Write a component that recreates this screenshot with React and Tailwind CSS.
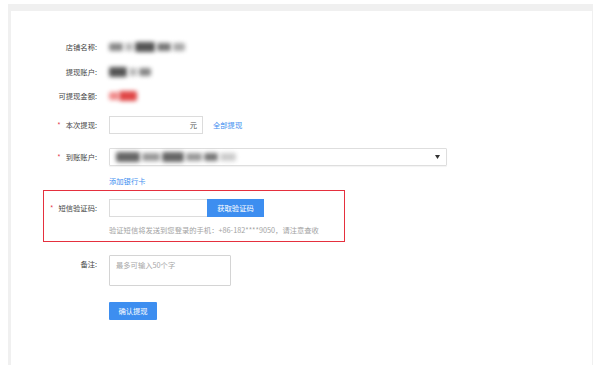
import React from "react";

const Label = ({ children, required, width = "w-[86px]" }) => (
  <div className={`${width} shrink-0 text-right text-[#444]`}>
    {required && <span className="text-[#e5404c] mr-[5px]">*</span>}
    {children}
  </div>
);

// blurred placeholder for hidden values in the screenshot
const Blur = ({ w, color = "bg-[#8c8c8c]", className = "" }) => (
  <div className={`h-[8px] ${w} ${color} rounded-[2px] blur-[2px] ${className}`} />
);

const App = () => {
  return (
    <div
      className="w-[593px] h-[365px] bg-white pl-[8px] pt-[4px] overflow-hidden text-[7.3px] leading-[12px]"
      style={{ fontFamily: '"Noto Sans CJK SC", "Noto Sans", sans-serif' }}
    >
      <div className="h-full bg-[#f0f0f0] pt-[7px] pl-[3px] pr-[1px]">
        <div className="h-full bg-white flex flex-col">
          {/* 店铺名称 */}
          <div className="flex items-center gap-[12px] mt-[30px] h-[12px]">
            <Label>店铺名称:</Label>
            <div className="flex items-center gap-[2px]">
              <Blur w="w-[14px]" color="bg-[#888]" />
              <Blur w="w-[8px]" color="bg-[#bbb]" />
              <Blur w="w-[20px]" color="bg-[#555]" className="h-[10px]" />
              <Blur w="w-[14px]" color="bg-[#777]" />
              <Blur w="w-[12px]" color="bg-[#aaa]" />
            </div>
          </div>

          {/* 提现账户 */}
          <div className="flex items-center gap-[12px] mt-[13px] h-[12px]">
            <Label>提现账户:</Label>
            <div className="flex items-center gap-[2px]">
              <Blur w="w-[18px]" color="bg-[#555]" className="h-[10px]" />
              <Blur w="w-[8px]" color="bg-[#bbb]" />
              <Blur w="w-[12px]" color="bg-[#888]" />
            </div>
          </div>

          {/* 可提现金额 */}
          <div className="flex items-center gap-[12px] mt-[12px] h-[12px]">
            <Label>可提现金额:</Label>
            <div className="flex items-center gap-[0px]">
              <Blur w="w-[10px]" color="bg-[#f08a8a]" />
              <Blur w="w-[18px]" color="bg-[#e04848]" className="h-[10px]" />
            </div>
          </div>

          {/* 本次提现 */}
          <div className="flex items-center gap-[12px] mt-[14px]">
            <Label required>本次提现:</Label>
            <div className="w-[94px] h-[18px] border border-[#dcdcdc] flex items-center justify-end pr-[5px] text-[#555]">
              元
            </div>
            <a className="ml-[-2px] text-[#3d8ef0] cursor-pointer">全部提现</a>
          </div>

          {/* 到账账户 */}
          <div className="flex items-center gap-[12px] mt-[14px]">
            <Label required>到账账户:</Label>
            <div className="w-[338px] h-[18px] border border-[#dedede] rounded-[1px] shadow-[0_1px_1px_rgba(0,0,0,0.05)] flex items-center justify-between pl-[6px] pr-[6px]">
              <div className="flex items-center gap-[2px]">
                <Blur w="w-[24px]" color="bg-[#666]" className="h-[10px]" />
                <Blur w="w-[18px]" color="bg-[#999]" />
                <Blur w="w-[22px]" color="bg-[#666]" className="h-[10px]" />
                <Blur w="w-[16px]" color="bg-[#999]" />
                <Blur w="w-[14px]" color="bg-[#777]" />
                <Blur w="w-[16px]" color="bg-[#ccc]" />
              </div>
              <svg width="5" height="4" viewBox="0 0 5 4">
                <path d="M0 0 H5 L2.5 4 Z" fill="#333" />
              </svg>
            </div>
          </div>

          {/* 添加银行卡 */}
          <div className="flex items-center gap-[12px] mt-[9px] h-[12px]">
            <div className="w-[86px] shrink-0" />
            <a className="text-[#3d8ef0] cursor-pointer">添加银行卡</a>
          </div>

          {/* 短信验证码 (highlighted) */}
          <div className="ml-[32px] mt-[3px] w-[302px] border border-[#e5303e] pt-[8px] pb-[5px]">
            <div className="flex items-center gap-[12px]">
              <Label required width="w-[53px]">短信验证码:</Label>
              <div className="flex">
                <div className="w-[98px] h-[18px] border border-[#dcdcdc] border-r-0" />
                <button className="w-[57px] h-[18px] bg-[#3d8ef0] text-white flex items-center justify-center">
                  获取验证码
                </button>
              </div>
            </div>
            <div className="flex gap-[12px] mt-[7px]">
              <div className="w-[53px] shrink-0" />
              <div className="text-[#a3a3a3] whitespace-nowrap">
                验证短信将发送到您登录的手机：+86-182****9050，请注意查收
              </div>
            </div>
          </div>

          {/* 备注 */}
          <div className="flex items-start gap-[12px] mt-[13px]">
            <Label>
              <div className="pt-[3px]">备注:</div>
            </Label>
            <textarea
              className="w-[122px] h-[31px] border border-[#d4d4d4] rounded-[1px] resize-none px-[6px] py-[3px] text-[7.3px] leading-[12px] placeholder:text-[#a8a8a8] outline-none"
              placeholder="最多可输入50个字"
            />
          </div>

          {/* 确认提现 */}
          <div className="flex gap-[12px] mt-[16px]">
            <div className="w-[86px] shrink-0" />
            <button className="w-[48px] h-[18px] bg-[#3d8ef0] text-white flex items-center justify-center rounded-[1px]">
              确认提现
            </button>
          </div>
        </div>
      </div>
    </div>
  );
};

export default App;
